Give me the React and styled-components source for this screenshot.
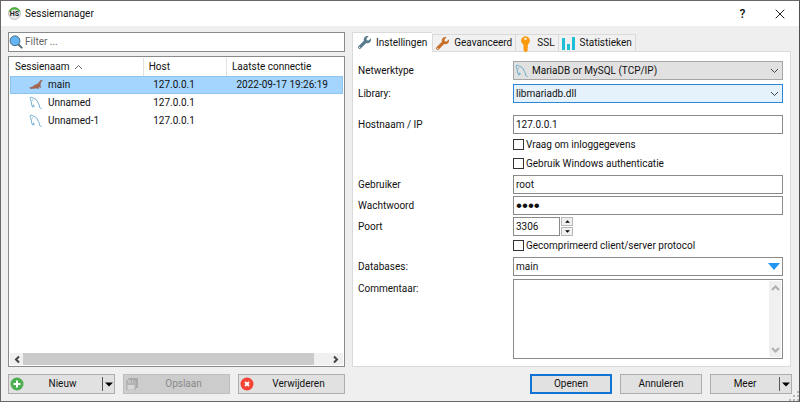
import { FaWrench, FaKey } from "react-icons/fa";
import styled, { createGlobalStyle, css } from "styled-components";

const sessions = [
  { name: "main", host: "127.0.0.1", last: "2022-09-17 19:26:19", icon: "seal" },
  { name: "Unnamed", host: "127.0.0.1", last: "", icon: "dolphin" },
  { name: "Unnamed-1", host: "127.0.0.1", last: "", icon: "dolphin" },
];

const DolphinIcon = () => (
  <svg width="14" height="14" viewBox="0 0 14 14" fill="none" stroke="#5aa3c8" strokeWidth="0.9">
    <path d="M4 11.200 2.900 9.600C2.300 7.600 2.600 5.900 1.800 4.200 1.200 2.900.8 2 1.300 1.500c.8-.7 2.200 0 3 .7C6.700 2.600 8.300 4.500 9 6.600c.5 1.500.9 2.400 2.100 3.200L10 10.600c1 .7 1.700 1.300 2.600 2.400" />
    <path d="M4 11.200 4.500 9l1.300 1.200" />
    <path d="M3.400 3.600v.9" />
  </svg>
);

const SealIcon = () => (
  <svg width="14" height="14" viewBox="0 0 14 14">
    <path
      d="M13.500 2.200 12 2.500C10.600 2.700 10.500 4 9.800 5 8.800 6.200 7 6.300 5.600 7.200 4.300 8 3.600 8.900 2.400 9.300L.6 9.600l1.300.5-.8.7 2.400-.4c1.500.1 3-.1 4.300-.3l1.600.6.5-.4-.6-.8 1.300-.6 1 .5.3-.5-.8-1.200c.6-1.300.2-2.700.7-3.800z"
      fill="#a9674f"
      stroke="#80503f"
      strokeWidth="0.4"
    />
  </svg>
);

const SearchIcon = () => (
  <svg width="14" height="14" viewBox="0 0 14 14">
    <path d="M9 9l3.600 3.600" stroke="#566a75" strokeWidth="2" strokeLinecap="round" />
    <circle cx="6" cy="5.800" r="4.900" fill="#64b5f6" stroke="#47687d" strokeWidth="1" />
  </svg>
);

const LogoIcon = () => (
  <svg width="13" height="13" viewBox="0 0 13 13">
    <circle cx="6.500" cy="6.500" r="6" fill="#e8e8e8" stroke="#a9a9a9" strokeWidth="0.7" />
    <path d="M1 4.300a6 6 0 0 1 11 0L10.800 3.800a6 6 0 0 0-8.600 0z" fill="#4cae3c" stroke="#4cae3c" />
    <text x="6.500" y="9" textAnchor="middle" fontSize="7" fontWeight="700" fontFamily="Roboto, sans-serif" fill="#222">
      HS
    </text>
  </svg>
);

const ChartIcon = () => (
  <svg width="13" height="13" viewBox="0 0 13 13" fill="#1fbfd8">
    <path d="M0 1h3v12H0zM5 7h3v6H5zM10 0h3v13h-3z" />
  </svg>
);

const SaveIcon = () => (
  <svg width="14" height="14" viewBox="0 0 14 14">
    <path d="M3.500 1H12l1 1v9h-2V4H3z" fill="#a9a9a9" />
    <path d="M1 3h8.500L11 4.500V13H1z" fill="#b3b3b3" />
    <path d="M3 3h5v3H3z" fill="#c6c6c6" />
    <path d="M6 3.500h1v2H6z" fill="#999" />
    <path d="M2.500 8h7v4.500h-7z" fill="#d8d8d8" />
  </svg>
);

const AddIcon = () => (
  <svg width="14" height="14" viewBox="0 0 14 14">
    <circle cx="7" cy="7" r="6.500" fill="#4caf50" />
    <path d="M7 3.500v7M3.500 7h7" stroke="#fff" strokeWidth="2" />
  </svg>
);

const DeleteIcon = () => (
  <svg width="14" height="14" viewBox="0 0 14 14">
    <circle cx="7" cy="7" r="6.500" fill="#f44336" />
    <path d="M5 5l4 4M9 5l-4 4" stroke="#fff" strokeWidth="1.800" />
  </svg>
);

const angles = {
  up: "M1 6l3.500-3.500L8 6",
  down: "M1 3l3.500 3.500L8 3",
  left: "M6 1.500l-3 3 3 3",
  right: "M3 1.500l3 3-3 3",
};

const Angle = ({ to, color = "#444", weight = 1 }) => (
  <svg width="9" height="9" viewBox="0 0 9 9" fill="none" stroke={color} strokeWidth={weight}>
    <path d={angles[to]} />
  </svg>
);

const Caret = ({ up }) => (
  <svg width="8" height="5" viewBox="0 0 8 5">
    <path d={up ? "M0 4.500h8L4 .5z" : "M0 .5h8L4 4.500z"} fill="#000" />
  </svg>
);

const App = () => {
  return (
    <>
      <GlobalStyle />
      <Dialog>
        <TitleBar>
          <LogoIcon />
          <h1>Sessiemanager</h1>
          <TitleButton aria-label="Help">?</TitleButton>
          <TitleButton aria-label="Sluiten">
            <svg width="10" height="10" viewBox="0 0 10 10" stroke="#222" strokeWidth="1">
              <path d="M.7.7l8.600 8.600M9.300.7L.7 9.300" />
            </svg>
          </TitleButton>
        </TitleBar>

        <Content>
          <Sessions>
            <FilterBox>
              <SearchIcon />
              <input type="text" placeholder="Filter ..." aria-label="Filter" />
            </FilterBox>
            <ListBox>
              <SessionTable>
                <colgroup>
                  <col className="name" />
                  <col className="host" />
                  <col />
                </colgroup>
                <thead>
                  <tr>
                    <th>
                      <span className="sorted">
                        Sessienaam <Angle to="up" color="#666" />
                      </span>
                    </th>
                    <th>Host</th>
                    <th>Laatste connectie</th>
                  </tr>
                </thead>
                <tbody>
                  {sessions.map((session) => (
                    <SessionRow key={session.name} $selected={session.name === "main"}>
                      <td>
                        <span className="session">
                          {session.icon === "seal" ? <SealIcon /> : <DolphinIcon />}
                          {session.name}
                        </span>
                      </td>
                      <td>{session.host}</td>
                      <td>{session.last}</td>
                    </SessionRow>
                  ))}
                </tbody>
              </SessionTable>
              <ScrollBar>
                <Angle to="left" weight={2} />
                <div className="thumb" />
                <Angle to="right" weight={2} />
              </ScrollBar>
            </ListBox>
          </Sessions>

          <Settings>
            <Tabs role="tablist">
              <Tab role="tab" aria-selected="true" $active>
                <FaWrench color="#587a8c" />
                Instellingen
              </Tab>
              <Tab role="tab" aria-selected="false">
                <FaWrench color="#c8702a" />
                Geavanceerd
              </Tab>
              <Tab role="tab" aria-selected="false">
                <KeyIcon />
                SSL
              </Tab>
              <Tab role="tab" aria-selected="false">
                <ChartIcon />
                Statistieken
              </Tab>
            </Tabs>
            <Panel>
              <Row>
                <label htmlFor="nettype">Netwerktype</label>
                <SelectBox $icon>
                  <DolphinIcon />
                  <select id="nettype">
                    <option>MariaDB or MySQL (TCP/IP)</option>
                  </select>
                  <Angle to="down" />
                </SelectBox>
              </Row>
              <Row $gap={4}>
                <label htmlFor="library">Library:</label>
                <SelectBox $focused>
                  <select id="library">
                    <option>libmariadb.dll</option>
                  </select>
                  <Angle to="down" />
                </SelectBox>
              </Row>
              <Row $gap={12}>
                <label htmlFor="host">Hostnaam / IP</label>
                <Field id="host" type="text" defaultValue="127.0.0.1" />
              </Row>
              <Row $gap={1}>
                <CheckLabel>
                  <input type="checkbox" />
                  Vraag om inloggegevens
                </CheckLabel>
              </Row>
              <Row>
                <CheckLabel>
                  <input type="checkbox" />
                  Gebruik Windows authenticatie
                </CheckLabel>
              </Row>
              <Row $gap={2}>
                <label htmlFor="user">Gebruiker</label>
                <Field id="user" type="text" defaultValue="root" />
              </Row>
              <Row $gap={2}>
                <label htmlFor="password">Wachtwoord</label>
                <Field id="password" type="password" defaultValue="main" />
              </Row>
              <Row $gap={2}>
                <label htmlFor="port">Poort</label>
                <PortBox>
                  <Field id="port" type="text" defaultValue="3306" />
                  <Spinner>
                    <button type="button" aria-label="Hoger">
                      <Caret up />
                    </button>
                    <button type="button" aria-label="Lager">
                      <Caret />
                    </button>
                  </Spinner>
                </PortBox>
              </Row>
              <Row>
                <CheckLabel>
                  <input type="checkbox" />
                  Gecomprimeerd client/server protocol
                </CheckLabel>
              </Row>
              <Row $gap={2}>
                <label htmlFor="databases">Databases:</label>
                <DatabaseBox>
                  <input id="databases" type="text" defaultValue="main" />
                  <button type="button" aria-label="Databases kiezen">
                    <svg width="12" height="7" viewBox="0 0 12 7">
                      <path d="M0 0h12L6 7z" fill="#2196f3" />
                    </svg>
                  </button>
                </DatabaseBox>
              </Row>
              <Row $gap={3} $tall>
                <label htmlFor="comment">Commentaar:</label>
                <CommentBox>
                  <textarea id="comment" />
                  <div className="track">
                    <Angle to="up" color="#b0b0b0" weight={2} />
                    <Angle to="down" color="#b0b0b0" weight={2} />
                  </div>
                </CommentBox>
              </Row>
            </Panel>
          </Settings>
        </Content>

        <Footer>
          <LeftActions>
            <SplitButton>
              <button className="main">
                <AddIcon />
                <span>Nieuw</span>
              </button>
              <button className="more" aria-label="Nieuw, meer opties">
                <Caret />
              </button>
            </SplitButton>
            <ActionButton disabled>
              <SaveIcon />
              <span>Opslaan</span>
            </ActionButton>
            <ActionButton>
              <DeleteIcon />
              <span>Verwijderen</span>
            </ActionButton>
          </LeftActions>
          <RightActions>
            <ActionButton $primary>
              <span>Openen</span>
            </ActionButton>
            <ActionButton>
              <span>Annuleren</span>
            </ActionButton>
            <SplitButton>
              <button className="main">
                <span>Meer</span>
              </button>
              <button className="more" aria-label="Meer opties">
                <Caret />
              </button>
            </SplitButton>
          </RightActions>
          <Grip width="10" height="10" viewBox="0 0 10 10" fill="#b4b4b4">
            <path d="M8 0h2v2H8zM4 4h2v2H4zM8 4h2v2H8zM0 8h2v2H0zM4 8h2v2H4zM8 8h2v2H8z" />
          </Grip>
        </Footer>
      </Dialog>
    </>
  );
};

export default App;

// the key hangs straight down with its ring on top
const KeyIcon = styled(FaKey).attrs({ color: "#fb9a0c" })`
  transform: rotate(-45deg);
`;

const GlobalStyle = createGlobalStyle`
  * {
    box-sizing: border-box;
  }
  body {
    margin: 0;
    color: #111;
    font: 10px/14px Roboto, sans-serif;
  }
  button, input, select, textarea {
    margin: 0;
    padding: 0;
    border: 0;
    border-radius: 0;
    background: none;
    color: inherit;
    font: inherit;
    outline: none;
  }
  svg {
    display: block;
    flex: none;
  }
`;

const Dialog = styled.main`
  display: flex;
  flex-direction: column;
  min-height: 100vh;
  border: 1px solid #6c6668;
  border-right: 1px solid #505054;
  background: #efefef;
`;

const TitleBar = styled.header`
  display: flex;
  align-items: center;
  height: 25px;
  padding: 0 1px 0 7px;
  background: #fff;
  h1 {
    flex: 1;
    margin: 0 0 0 4px;
    font-size: 10px;
    font-weight: 400;
  }
`;

const TitleButton = styled.button`
  display: flex;
  justify-content: center;
  align-items: center;
  width: 37px;
  height: 24px;
  font-size: 12px;
  font-weight: 500;
`;

const Content = styled.div`
  display: flex;
  flex: 1;
  gap: 7px;
  padding: 6px 8px 7px 7px;
`;

const Sessions = styled.section`
  display: flex;
  flex: 337;
  flex-direction: column;
  gap: 4px;
  min-width: 0;
`;

const frame = css`
  border: 1px solid #8a8a8a;
  background: #fff;
`;

const FilterBox = styled.div`
  ${frame}
  display: flex;
  align-items: center;
  gap: 2px;
  height: 20px;
  input {
    flex: 1;
  }
  input::placeholder {
    color: #666;
    opacity: 1;
  }
`;

const ListBox = styled.div`
  ${frame}
  display: flex;
  flex: 1;
  flex-direction: column;
  justify-content: space-between;
  padding: 1px;
`;

const SessionTable = styled.table`
  width: 100%;
  border-collapse: collapse;
  table-layout: fixed;
  .name {
    width: 40%;
  }
  .host {
    width: 25%;
  }
  th {
    height: 18px;
    padding: 0 5px;
    border-right: 1px solid #e2e2e2;
    font-weight: 400;
    text-align: left;
  }
  th:last-child {
    border-right: 0;
  }
  td {
    height: 18px;
    padding: 0 10px;
  }
  .sorted,
  .session {
    display: flex;
    align-items: center;
    gap: 5px;
  }
  .session {
    padding-left: 9px;
  }
`;

const SessionRow = styled.tr`
  ${({ $selected }) =>
    $selected &&
    css`
      background: #a4d5ff;
      box-shadow: inset 0 0 0 1px #8cc4f2;
    `}
`;

const ScrollBar = styled.div`
  display: flex;
  justify-content: space-between;
  align-items: center;
  height: 12px;
  padding: 0 3px;
  background: #f0f0f0;
  .thumb {
    width: 89%;
    height: 12px;
    margin: 0 auto 0 1px;
    background: #cbcbcb;
  }
`;

const Settings = styled.section`
  display: flex;
  flex: 439;
  flex-direction: column;
  min-width: 0;
`;

const Tabs = styled.div`
  display: flex;
  align-items: flex-end;
  height: 19px;
`;

const Tab = styled.button`
  display: flex;
  align-items: center;
  gap: 5px;
  height: 17px;
  padding: 0 3px;
  border: 1px solid #dadada;
  border-width: 1px 0 0 1px;
  background: #f1f1f1;
  svg {
    width: 13px;
    height: 13px;
  }
  &:last-child {
    border-right-width: 1px;
  }
  ${({ $active }) =>
    $active &&
    css`
      z-index: 1;
      height: 20px;
      margin-bottom: -1px;
      padding: 0 5px;
      background: #fff;
    `}
`;

const Panel = styled.form`
  flex: 1;
  padding: 9px 7px 6px 5px;
  border: 1px solid #dadada;
  background: #fff;
`;

const Row = styled.div`
  display: grid;
  grid-template-columns: 155px 1fr;
  align-items: ${({ $tall }) => ($tall ? "start" : "center")};
  min-height: 19px;
  margin-top: ${({ $gap = 0 }) => $gap}px;
  ${({ $tall }) =>
    $tall &&
    css`
      label {
        padding-top: 3px;
      }
    `}
`;

const Field = styled.input`
  ${frame}
  width: 100%;
  height: 19px;
  padding: 0 2px;
  &[type="password"] {
    font-family: "Liberation Sans", sans-serif;
    font-size: 17px;
  }
`;

const SelectBox = styled.div`
  display: grid;
  grid-template-columns: 16px 1fr 16px;
  align-items: center;
  height: 19px;
  border: 1px solid ${({ $focused }) => ($focused ? "#2b87d8" : "#a6a6a6")};
  background: ${({ $focused }) => ($focused ? "#e5f1fb" : "#e1e1e1")};
  select {
    grid-area: 1 / 1 / 2 / 4;
    height: 17px;
    padding-left: ${({ $icon }) => ($icon ? 18 : 2)}px;
    appearance: none;
  }
  svg {
    grid-row: 1;
    grid-column: 1;
    justify-self: center;
    pointer-events: none;
  }
  svg:last-child {
    grid-column: 3;
  }
`;

const CheckLabel = styled.label`
  display: flex;
  grid-column: 2;
  align-items: center;
  gap: 2px;
  input {
    width: 11px;
    height: 11px;
    border: 1px solid #333;
    background: #fff;
    appearance: none;
  }
  input:checked {
    background: #333;
  }
`;

const PortBox = styled.div`
  display: flex;
  align-items: center;
  gap: 1px;
  ${Field} {
    width: 47px;
  }
`;

const Spinner = styled.div`
  display: flex;
  flex-direction: column;
  gap: 1px;
  button {
    display: flex;
    justify-content: center;
    align-items: center;
    width: 12px;
    height: 9px;
    border: 1px solid #b8b8b8;
    background: #f0f0f0;
  }
  svg {
    width: 5px;
    height: 3px;
  }
`;

const DatabaseBox = styled.div`
  ${frame}
  display: flex;
  align-items: center;
  height: 19px;
  input {
    flex: 1;
    padding: 0 2px;
  }
  button {
    padding: 0 2px;
  }
`;

const CommentBox = styled.div`
  ${frame}
  display: flex;
  height: 80px;
  padding: 1px;
  textarea {
    flex: 1;
    resize: none;
  }
  .track {
    display: flex;
    flex-direction: column;
    justify-content: space-between;
    align-items: center;
    width: 12px;
    padding: 3px 0;
    background: #f0f0f0;
  }
`;

const Footer = styled.footer`
  position: relative;
  display: flex;
  gap: 16px;
  padding: 0 7px;
  padding-bottom: 7px;
`;

const LeftActions = styled.div`
  display: grid;
  flex: 337;
  grid-template-columns: repeat(3, 1fr);
  gap: 8px;
`;

const RightActions = styled.div`
  display: grid;
  flex: 431;
  grid-template-columns: repeat(3, 82px);
  justify-content: end;
  gap: 8px;
`;

const ActionButton = styled.button`
  display: flex;
  align-items: center;
  height: 20px;
  padding: 0 1px;
  border: 1px solid #adadad;
  background: #e1e1e1;
  ${({ $primary }) =>
    $primary &&
    css`
      border: 2px solid #0f74d4;
    `}
  span {
    flex: 1;
    text-align: center;
  }
  &:disabled {
    border-color: #bfbfbf;
    background: #cccccc;
    color: #8a8a8a;
  }
`;

const SplitButton = styled.div`
  display: flex;
  height: 20px;
  border: 1px solid #adadad;
  background: #e1e1e1;
  .main {
    display: flex;
    flex: 1;
    align-items: center;
    padding: 0 1px;
  }
  .main span {
    flex: 1;
    text-align: center;
  }
  .more {
    display: flex;
    justify-content: center;
    align-items: center;
    width: 12px;
    margin: 2px 0;
    border-left: 1px solid #555;
  }
`;

const Grip = styled.svg`
  position: absolute;
  right: 0;
  bottom: 0;
`;
